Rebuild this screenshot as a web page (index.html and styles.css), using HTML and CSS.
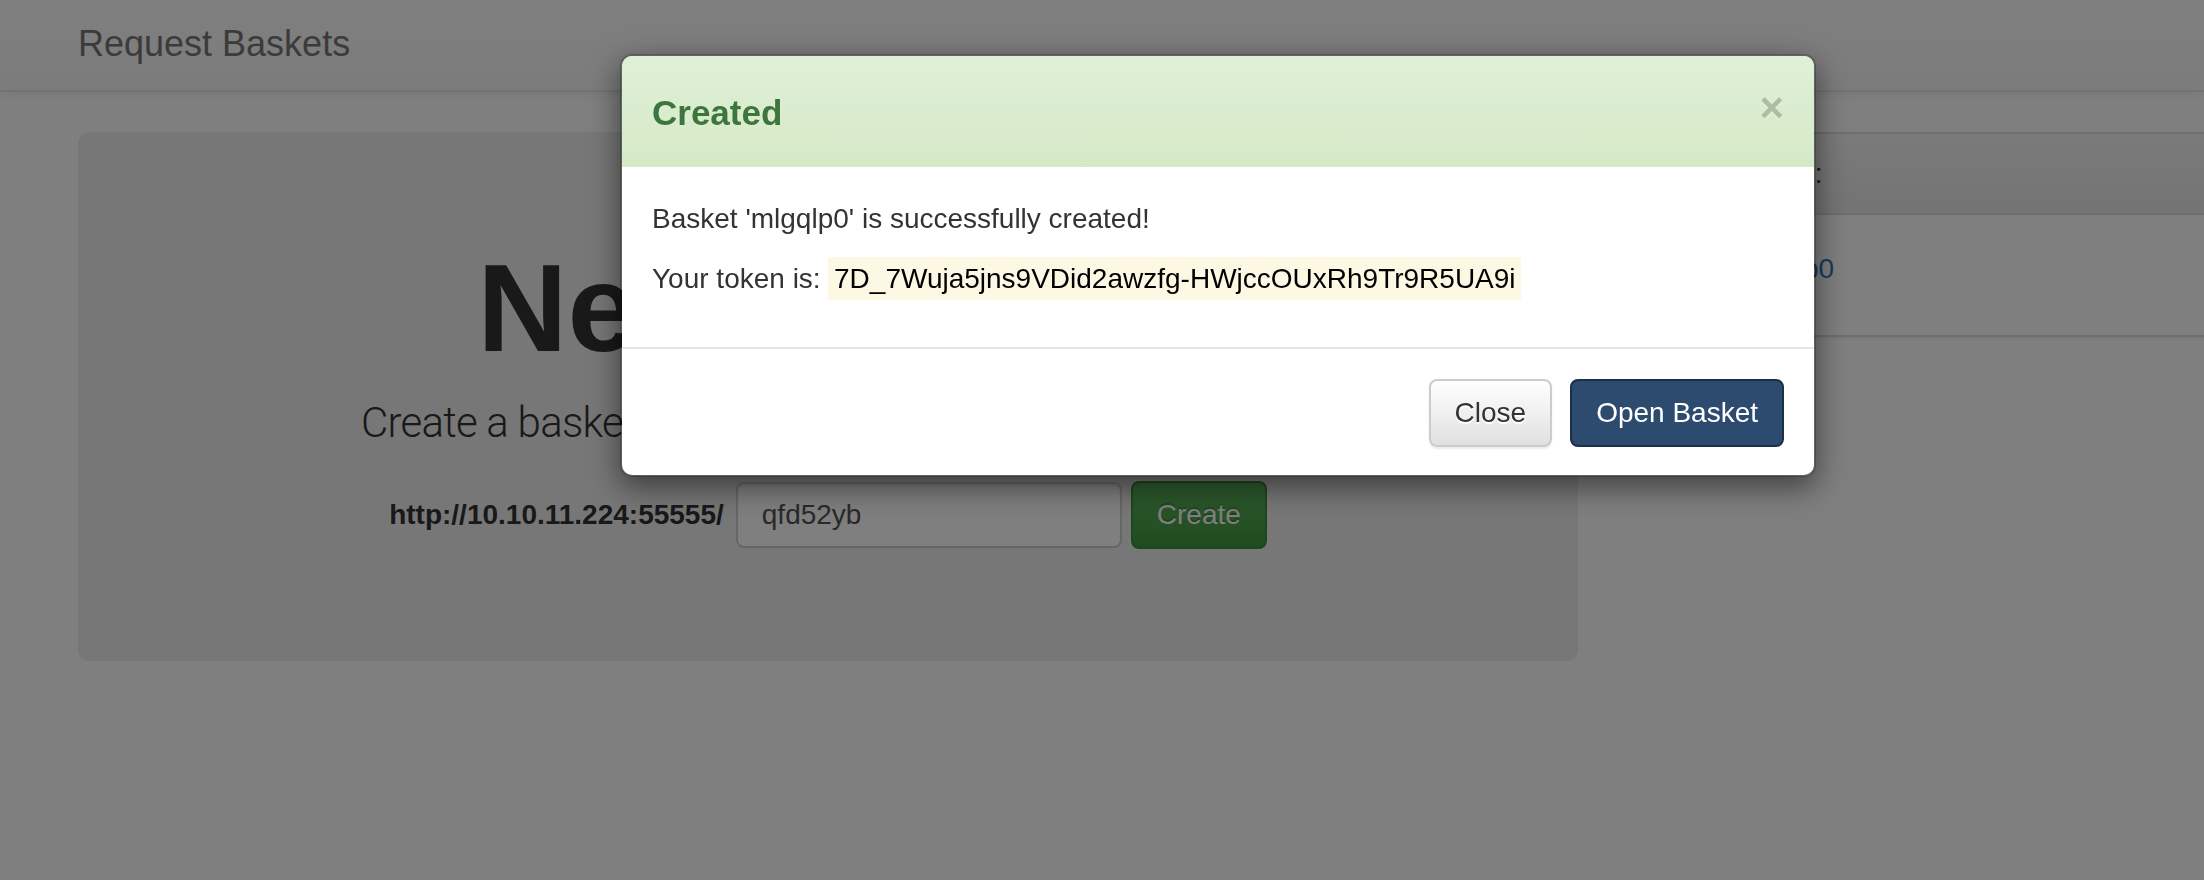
FILE: index.html
```html
<!DOCTYPE html>
<html lang="en">
<head>
<meta charset="utf-8">
<title>Request Baskets</title>
<link rel="stylesheet" href="styles.css">
</head>
<body>
<nav class="navbar">
  <div class="container">
    <a class="brand" href="#">Request Baskets</a>
  </div>
</nav>
<main class="container layout">
  <section class="jumbotron">
    <h1 class="jumbo-title">New Basket</h1>
    <p class="lead">Create a basket to collect and inspect HTTP requests</p>
    <form class="create-form">
      <label class="base-url" for="basket_name">http://10.10.11.224:55555/</label>
      <input class="name-input" id="basket_name" type="text" value="qfd52yb">
      <button type="button" class="btn btn-success">Create</button>
    </form>
  </section>
  <aside class="panel">
    <div class="panel-heading"><h3 class="panel-title">My Baskets:</h3></div>
    <div class="panel-body">
      <ul class="basket-list"><li><a class="basket-link" href="#">mlgqlp0</a></li></ul>
    </div>
  </aside>
</main>
<div class="backdrop"></div>
<div class="modal">
  <div class="modal-header">
    <h4 class="modal-title">Created</h4>
    <button type="button" class="close">&times;</button>
  </div>
  <div class="modal-body">
    <p class="msg">Basket 'mlgqlp0' is successfully created!</p>
    <p class="msg">Your token is: <mark class="token">7D_7Wuja5jns9VDid2awzfg-HWjccOUxRh9Tr9R5UA9i</mark></p>
  </div>
  <div class="modal-footer">
    <button type="button" class="btn btn-default">Close</button>
    <button type="button" class="btn btn-primary">Open Basket</button>
  </div>
</div>
</body>
</html>
```
FILE: styles.css
```css
html, body {
  margin: 0;
  overflow: hidden;
}
body {
  position: relative;
  width: 2204px;
  height: 880px;
  background: #fff;
  font-family: "Liberation Sans", Arial, sans-serif;
  font-size: 28px;
  line-height: 40px;
  color: #333;
}
.container {
  margin-left: 48px;
  width: 2280px;
  padding: 0 30px;
}
.navbar {
  height: 90px;
  background: linear-gradient(#fff, #f8f8f8);
  border-bottom: 2px solid #e7e7e7;
  box-shadow: inset 0 2px 0 rgba(255,255,255,.15), 0 2px 10px rgba(0,0,0,.075);
  margin-bottom: 40px;
}
.brand {
  display: block;
  padding-top: 24px;
  font-size: 36px;
  line-height: 40px;
  color: #777;
  text-decoration: none;
}
.layout {
  display: grid;
  grid-template-columns: 1500px 720px;
  column-gap: 60px;
  align-items: start;
}
.jumbotron {
  background: #eee;
  border-radius: 12px;
  padding: 107px 60px 112px;
  text-align: center;
}
.jumbo-title {
  margin: 0 0 15px;
  font-size: 125px;
  line-height: 138.6px;
  font-weight: bold;
  color: #333;
}
.lead {
  margin: 0 0 28px;
  font-family: Roboto, "Liberation Sans", sans-serif;
  font-weight: 300;
  font-size: 42px;
  line-height: 60px;
  letter-spacing: -0.75px;
}
.create-form {
  display: flex;
  justify-content: center;
  align-items: center;
}
.base-url {
  font-weight: bold;
  margin-right: 12px;
}
.name-input {
  width: 386px;
  height: 66px;
  box-sizing: border-box;
  border: 2px solid #ccc;
  border-radius: 8px;
  padding: 0 24px;
  font-family: "Liberation Sans", Arial, sans-serif;
  font-size: 28px;
  color: #555;
  background: #fff;
  box-shadow: inset 0 2px 2px rgba(0,0,0,.075);
  margin: 0 9px 0 0;
}
.btn {
  font-family: "Liberation Sans", Arial, sans-serif;
  font-size: 28px;
  line-height: 40px;
  padding: 12px 24px;
  border: 2px solid transparent;
  border-radius: 8px;
  margin: 0;
}
.btn-success {
  background: linear-gradient(#5cb85c, #419641);
  border-color: #3e8f3e;
  color: #fff;
  text-shadow: 0 -2px 0 rgba(0,0,0,.2);
}
.btn-default {
  background: linear-gradient(#fff, #e0e0e0);
  border-color: #ccc;
  color: #333;
  text-shadow: 0 2px 0 #fff;
  box-shadow: inset 0 2px 0 rgba(255,255,255,.15), 0 2px 2px rgba(0,0,0,.075);
}
.btn-primary {
  background: #2c4b6e;
  border-color: #1b2f46;
  color: #fff;
}
.panel {
  background: #fff;
  border: 2px solid #ddd;
  border-radius: 8px;
  box-shadow: 0 2px 2px rgba(0,0,0,.05);
}
.panel-heading {
  background: linear-gradient(#f5f5f5, #e8e8e8);
  border-bottom: 2px solid #ddd;
  border-radius: 6px 6px 0 0;
  padding: 20px 30px 19px;
}
.panel-title {
  margin: 0;
  font-size: 28px;
  line-height: 40px;
  font-weight: normal;
  color: #333;
}
.panel-body {
  padding: 34px 30px 46px;
}
.basket-list {
  margin: 0;
  padding-left: 66px;
}
.basket-link {
  color: #337ab7;
  text-decoration: none;
}
.backdrop {
  position: fixed;
  inset: 0;
  background: rgba(0,0,0,.5);
}
.modal {
  position: absolute;
  left: 620px;
  top: 54px;
  width: 1196px;
  box-sizing: border-box;
  background: #fff;
  background-clip: padding-box;
  border: 2px solid rgba(0,0,0,.2);
  border-radius: 12px;
  box-shadow: 0 10px 30px rgba(0,0,0,.5);
}
.modal-header {
  display: flex;
  justify-content: space-between;
  align-items: flex-start;
  padding: 31px 30px 29px;
  background: linear-gradient(#dff0d8, #d6e9c6);
  border-radius: 10px 10px 0 0;
}
.modal-title {
  margin: 0;
  font-size: 35px;
  line-height: 51px;
  font-weight: bold;
  color: #3c763d;
}
.close {
  background: none;
  border: 0;
  padding: 0;
  font-family: "Liberation Sans", Arial, sans-serif;
  font-size: 42px;
  line-height: 42px;
  font-weight: bold;
  color: #000;
  opacity: .2;
  text-shadow: 0 2px 0 #fff;
}
.modal-body {
  padding: 32px 30px 28px;
}
.msg {
  margin: 0 0 20px;
}
.token {
  background: #fcf8e3;
  color: #000;
  padding: 5.6px;
}
.modal-footer {
  display: flex;
  justify-content: flex-end;
  gap: 18px;
  border-top: 2px solid #e5e5e5;
  padding: 30px 30px 28px;
}
```
